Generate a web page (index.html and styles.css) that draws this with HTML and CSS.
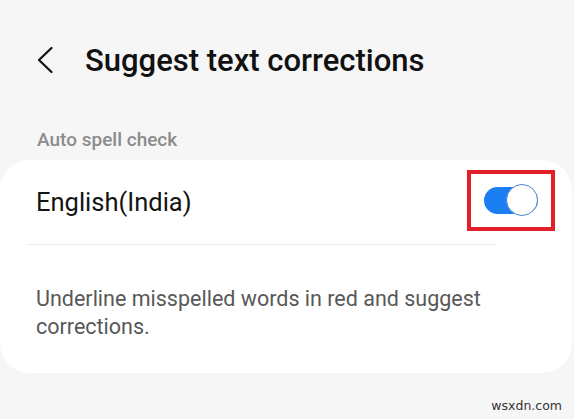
FILE: index.html
```html
<!DOCTYPE html>
<html>
<head>
<meta charset="utf-8">
<link rel="stylesheet" href="styles.css">
</head>
<body>
<div class="screen">
  <header class="topbar">
    <svg class="back" width="18" height="28" viewBox="0 0 18 28"><path d="M15.5 2 L3 14 L15.5 26" fill="none" stroke="#111" stroke-width="2.2" stroke-linecap="round" stroke-linejoin="round"/></svg>
    <h1 class="title">Suggest text corrections</h1>
  </header>
  <div class="section-label">Auto spell check</div>
  <section class="card">
    <div class="row">
      <span class="row-label">English(India)</span>
      <span class="highlight">
        <span class="switch"><span class="knob"></span></span>
      </span>
    </div>
    <div class="divider"></div>
    <p class="desc">Underline misspelled words in red and suggest corrections.</p>
  </section>
  <div class="watermark">wsxdn.com</div>
</div>
</body>
</html>
```
FILE: styles.css
```css
html, body {
  margin: 0;
  padding: 0;
}
body {
  background: #f6f6f6;
  font-family: Roboto, "Noto Sans", sans-serif;
  width: 574px;
  height: 419px;
  overflow: hidden;
}
.screen {
  display: flex;
  flex-direction: column;
  height: 419px;
}
.topbar {
  display: flex;
  align-items: center;
  gap: 31px;
  padding: 45px 0 0 36px;
  height: 30px;
}
.back {
  flex: none;
}
.title {
  margin: 0;
  font-size: 31px;
  font-weight: 500;
  color: #111;
  letter-spacing: 0;
}
.section-label {
  margin: 54px 0 0 37px;
  font-size: 19px;
  font-weight: 500;
  color: #8c8c8c;
  line-height: 22px;
}
.card {
  margin: 9px 2px 0 0;
  background: #fff;
  border-radius: 30px;
  padding: 0 36px 0 36px;
  height: 213px;
  box-sizing: border-box;
}
.row {
  display: flex;
  align-items: center;
  justify-content: space-between;
  height: 84px;
}
.row-label {
  font-size: 25.5px;
  color: #141414;
}
.highlight {
  display: flex;
  align-items: center;
  justify-content: center;
  width: 80px;
  height: 53px;
  border: 4px solid #e3202a;
  margin: 0 -19px 4px 0;
}
.switch {
  position: relative;
  width: 54px;
  height: 27px;
  background: #1b7ef2;
  border-radius: 14px;
}
.knob {
  position: absolute;
  right: 0;
  top: -3px;
  width: 30px;
  height: 30px;
  border-radius: 50%;
  background: #fff;
  border: 1.5px solid #4a88c8;
}
.divider {
  height: 1px;
  background: #ececec;
  margin: 0 40px 0 -8px;
}
.desc {
  margin: 40px 0 0 0;
  font-size: 21.5px;
  line-height: 28px;
  color: #585858;
  width: 470px;
}
.watermark {
  margin: auto 12px 6px auto;
  font-family: "DejaVu Sans", sans-serif;
  font-size: 12.5px;
  color: #333;
}
```
